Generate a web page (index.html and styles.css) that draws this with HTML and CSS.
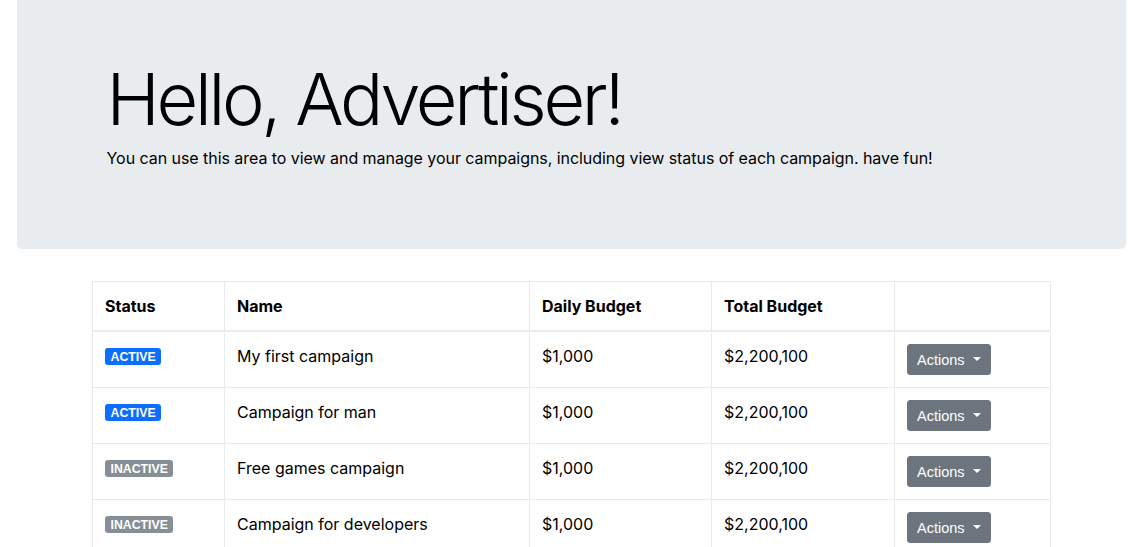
FILE: index.html
```html
<!DOCTYPE html>
<html lang="en">
<head>
<meta charset="utf-8">
<title>Campaigns</title>
<link rel="stylesheet" href="styles.css">
</head>
<body>
<div class="jumbotron">
  <div class="container">
    <h1 class="display">Hello, Advertiser!</h1>
    <p class="intro">You can use this area to view and manage your campaigns, including view status of each campaign. have fun!</p>
  </div>
</div>
<div class="table-wrap">
  <table class="table">
    <colgroup>
      <col class="c-status"><col class="c-name"><col class="c-daily"><col class="c-total"><col class="c-actions">
    </colgroup>
    <thead>
      <tr><th>Status</th><th>Name</th><th>Daily Budget</th><th>Total Budget</th><th></th></tr>
    </thead>
    <tbody>
      <tr>
        <td><span class="badge badge-active">ACTIVE</span></td>
        <td>My first campaign</td><td>$1,000</td><td>$2,200,100</td>
        <td><button class="btn">Actions <span class="caret"></span></button></td>
      </tr>
      <tr>
        <td><span class="badge badge-active">ACTIVE</span></td>
        <td>Campaign for man</td><td>$1,000</td><td>$2,200,100</td>
        <td><button class="btn">Actions <span class="caret"></span></button></td>
      </tr>
      <tr>
        <td><span class="badge badge-inactive">INACTIVE</span></td>
        <td>Free games campaign</td><td>$1,000</td><td>$2,200,100</td>
        <td><button class="btn">Actions <span class="caret"></span></button></td>
      </tr>
      <tr>
        <td><span class="badge badge-inactive">INACTIVE</span></td>
        <td>Campaign for developers</td><td>$1,000</td><td>$2,200,100</td>
        <td><button class="btn">Actions <span class="caret"></span></button></td>
      </tr>
    </tbody>
  </table>
</div>
</body>
</html>
```
FILE: styles.css
```css
* { box-sizing: border-box; }
body {
  margin: 0;
  font-family: Inter, "Liberation Sans", sans-serif;
  font-size: 16px;
  line-height: 1.5;
  color: #212529;
  background: #fff;
}
.jumbotron {
  margin: 0 17px 32px;
  padding: 56px 0 63px;
  background: #e9ecef;
  border-radius: 0 0 5px 5px;
}
.container {
  width: 960px;
  margin: 0 auto;
  padding: 0 15px;
}
.display {
  margin: 0 0 4px;
  font-size: 72px;
  font-weight: 300;
  line-height: 1.2;
  color: #000;
  letter-spacing: -3.3px;
}
.intro {
  margin: 0 0 16px;
  font-size: 16px;
  color: #000;
  letter-spacing: -0.05px;
}
.table-wrap {
  width: 958px;
  margin: 0 0 0 92px;
}
.table {
  width: 100%;
  border-collapse: collapse;
  table-layout: fixed;
  color: #000;
}
.c-status { width: 132px; }
.c-name { width: 305px; }
.c-daily { width: 182px; }
.c-total { width: 183px; }
.c-actions { width: 156px; }
.table th, .table td {
  border: 1px solid #e9ecef;
  padding: 12px;
  text-align: left;
  vertical-align: top;
}
.table th {
  font-weight: 700;
  border-bottom: 2px solid #e9ecef;
}
.badge {
  display: inline-block;
  padding: 3px 5.5px 2px;
  font-family: "Liberation Sans", Arial, sans-serif;
  font-size: 12.3px;
  font-weight: 700;
  line-height: 12px;
  color: #fff;
  border-radius: 3px;
  vertical-align: 1px;
}
.badge-active { background: #0d6efd; }
.badge-inactive { background: #868e96; }
.btn {
  display: inline-flex;
  align-items: center;
  gap: 8px;
  height: 31px;
  padding: 0 9px 0 9px;
  font-family: "Liberation Sans", Arial, sans-serif;
  font-size: 14.5px;
  color: #fff;
  background: #6c757d;
  border: 1px solid #6c757d;
  border-radius: 3px;
}
.caret {
  width: 0;
  height: 0;
  border-top: 4px solid #fff;
  border-left: 4px solid transparent;
  border-right: 4px solid transparent;
  margin-top: -1px;
}
```
